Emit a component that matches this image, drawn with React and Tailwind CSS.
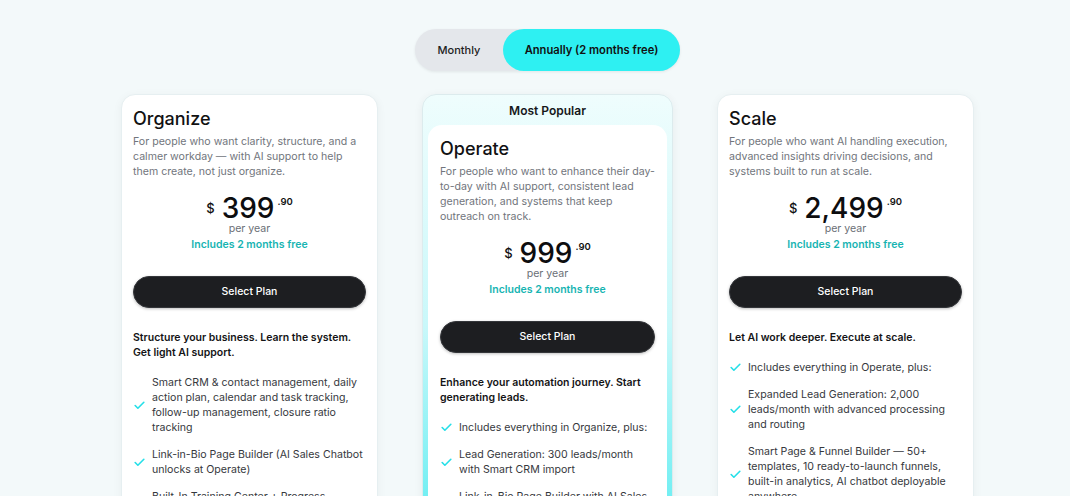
import React from "react";
import { Check } from "lucide-react";

const plans = [
  {
    name: "Organize",
    desc: "For people who want clarity, structure, and a calmer workday — with AI support to help them create, not just organize.",
    price: "399",
    tagline: "Structure your business. Learn the system. Get light AI support.",
    features: [
      "Smart CRM & contact management, daily action plan, calendar and task tracking, follow-up management, closure ratio tracking",
      "Link-in-Bio Page Builder (AI Sales Chatbot unlocks at Operate)",
      "Built-In Training Center + Progress Tracking",
      "Email support",
    ],
  },
  {
    name: "Operate",
    desc: "For people who want to enhance their day-to-day with AI support, consistent lead generation, and systems that keep outreach on track.",
    price: "999",
    tagline: "Enhance your automation journey. Start generating leads.",
    features: [
      "Includes everything in Organize, plus:",
      "Lead Generation: 300 leads/month with Smart CRM import",
      "Link-in-Bio Page Builder with AI Sales Chatbot",
      "Priority support",
    ],
  },
  {
    name: "Scale",
    desc: "For people who want AI handling execution, advanced insights driving decisions, and systems built to run at scale.",
    price: "2,499",
    tagline: "Let AI work deeper. Execute at scale.",
    features: [
      "Includes everything in Operate, plus:",
      "Expanded Lead Generation: 2,000 leads/month with advanced processing and routing",
      "Smart Page & Funnel Builder — 50+ templates, 10 ready-to-launch funnels, built-in analytics, AI chatbot deployable anywhere",
      "Dedicated success manager",
    ],
  },
];

// card body shared by all three plans
const PlanBody = ({ plan, wide }) => (
  <div className={wide ? "px-3 pt-3 pb-6" : "px-[11px] pt-3 pb-6"}>
    <h3 className="text-[18px] leading-6 font-medium text-[#111113]">{plan.name}</h3>
    <p className="mt-[3px] text-[10.6px] leading-[15px] text-[#71757c]">{plan.desc}</p>

    <div className="mt-[15px] flex flex-col items-center">
      <div className="flex items-start">
        <span className="text-[13px] leading-none font-medium text-[#111] mt-[8px] mr-[7px]">$</span>
        <span className="text-[28px] leading-[28px] font-medium text-[#0d0d0f]">{plan.price}</span>
        <span className="text-[9.5px] leading-none font-semibold text-[#111] mt-[3px] ml-[3px]">.90</span>
      </div>
      <span className="text-[10.6px] leading-[14px] text-[#6b6f76]">per year</span>
      <span className="mt-[2px] text-[10.5px] leading-[14px] font-semibold text-[#17b4b2]">Includes 2 months free</span>
    </div>

    <button className="mt-6 w-full h-8 rounded-full bg-[#1d1e21] border border-[#34363a] text-white text-[10.5px] font-medium shadow-[0_1px_3px_rgba(0,0,0,0.25)]">
      Select Plan
    </button>

    <p className="mt-[22px] text-[10.5px] leading-[15px] font-semibold text-[#141416]">{plan.tagline}</p>

    <ul className="mt-[15px] flex flex-col gap-3">
      {plan.features.map((f, i) => (
        <li key={i} className="flex items-center gap-[6px]">
          <Check className="w-[13px] h-[13px] shrink-0 text-[#25dfe8]" strokeWidth={3} />
          <span className="text-[10.6px] leading-[15px] text-[#36383d]">{f}</span>
        </li>
      ))}
    </ul>
  </div>
);

export default function App() {
  return (
    <div
      className="min-h-screen bg-[#f3f9fa] pl-[25px] pt-[29px]"
      style={{ fontFamily: "Inter, 'Noto Sans', sans-serif" }}
    >
      {/* Billing toggle */}
      <div className="flex justify-center">
        <div className="flex h-[42px] rounded-full bg-[#e4e7eb] shadow-[0_1px_3px_rgba(0,0,0,0.08)]">
          <button className="w-[88px] text-[11px] font-medium text-[#222]">Monthly</button>
          <button className="w-[177px] rounded-full bg-[#2ef0f2] text-[11.2px] font-semibold text-[#111]">
            Annually (2 months free)
          </button>
        </div>
      </div>

      {/* Plans */}
      <div className="mt-[23px] flex justify-center items-start gap-[44px]">
        <div className="w-[257px] rounded-[14px] bg-white border border-[#e6eff1] shadow-[0_2px_10px_rgba(0,0,0,0.05)]">
          <PlanBody plan={plans[0]} />
        </div>

        <div className="w-[251px] rounded-[14px] border border-[#dcebed] px-[5px] pb-[5px] shadow-[0_2px_10px_rgba(0,0,0,0.06)] bg-[linear-gradient(180deg,#effdfd_0px,#c9f8fa_230px,#6aeef2_420px,#3ff0f3_600px)]">
          <div className="h-[30px] pt-[2px] flex items-center justify-center text-[12px] font-semibold text-[#16171a]">
            Most Popular
          </div>
          <div className="rounded-[14px] bg-white">
            <PlanBody plan={plans[1]} wide />
          </div>
        </div>

        <div className="w-[257px] rounded-[14px] bg-white border border-[#e6eff1] shadow-[0_2px_10px_rgba(0,0,0,0.05)]">
          <PlanBody plan={plans[2]} />
        </div>
      </div>
    </div>
  );
}
